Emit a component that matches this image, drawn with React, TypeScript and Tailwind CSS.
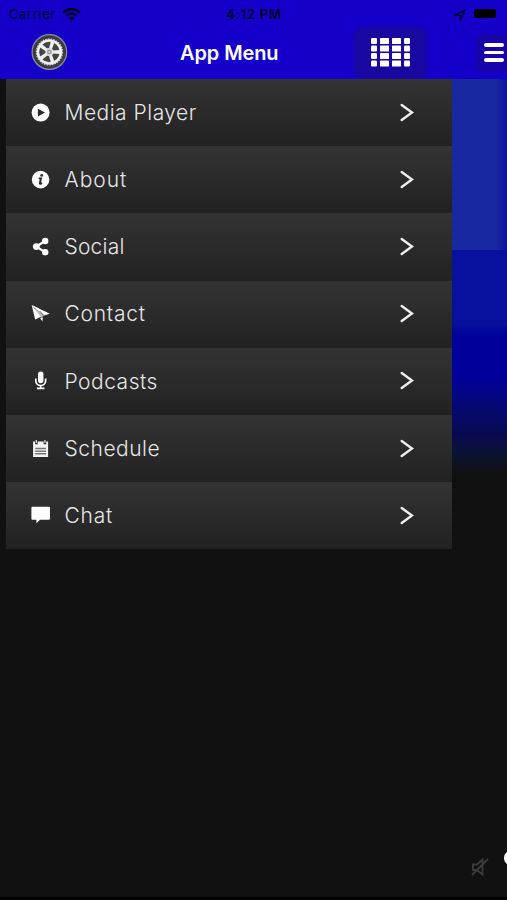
import React from 'react';

const PlayIcon = () => (
  <svg width="20" height="20" viewBox="0 0 20 20">
    <circle cx="9.6" cy="9.6" r="9" fill="#fff" />
    <path d="M6.9 5.8 L14 9.6 L6.9 13.4 Z" fill="#292929" />
  </svg>
);

const InfoIcon = () => (
  <svg width="20" height="20" viewBox="0 0 20 20">
    <circle cx="9.6" cy="9.6" r="8.8" fill="#fff" />
    <circle cx="10.7" cy="5.4" r="1.4" fill="#292929" />
    <path d="M7.6 8.4 H10 L8.8 13.4 Q8.9 14.3 11 12.9" fill="none" stroke="#292929" strokeWidth="1.9" />
  </svg>
);

const ShareIcon = () => (
  <svg width="20" height="20" viewBox="0 0 20 20" fill="#fff">
    <path d="M14.2 4 L5.3 9.6 L14.2 15.2" fill="none" stroke="#fff" strokeWidth="2.3" />
    <circle cx="14.2" cy="4" r="3.2" />
    <circle cx="5.3" cy="9.6" r="3.4" />
    <circle cx="14.2" cy="15.2" r="3.2" />
  </svg>
);

const SendIcon = () => (
  <svg width="20" height="20" viewBox="0 0 20 20" fill="#fff">
    <path d="M0.6 1 L18.8 9.8 L13 11.6 L0.6 1 L10.4 12.6 L4.2 15.6 Z" />
    <path d="M0.6 1 L13 11.6 L10.4 13.4 Z" fill="#bbb" />
    <path d="M0.6 1 L7 4.1 L13 11.2 Z" />
    <path d="M8.8 7.2 L12.4 11.2" stroke="#555" strokeWidth=".9" />
    <path d="M9 13.9 L11.8 13.2 L11.4 17.4 Z" />
  </svg>
);

const MicIcon = () => (
  <svg width="20" height="20" viewBox="0 0 20 20">
    <rect x="7" y="0.6" width="5.4" height="11.7" rx="2.7" fill="#fff" />
    <path d="M4.8 7.6 V9.7 A4.9 4.9 0 0 0 14.6 9.7 V7.6 M9.7 14.4 V17.4 M5.9 17.4 H13.5" fill="none" stroke="#fff" strokeWidth="1.7" />
  </svg>
);

const CalendarIcon = () => (
  <svg width="20" height="20" viewBox="0 0 20 20">
    <path d="M2.1 2.6 H4.1 V5.2 H6.7 V2.6 H12.6 V5.2 H15.2 V2.6 H17.1 V18.1 H2.1 Z" fill="#f4f4f4" />
    <path d="M5.3 0.9 V4.1 M13.9 0.9 V4.1" stroke="#ccc" strokeWidth="1.4" />
    <path d="M4.2 9.6 H15 M4.2 12.2 H15 M4.2 14.8 H15" stroke="#777" strokeWidth="1.5" />
  </svg>
);

const ChatIcon = () => (
  <svg width="20" height="20" viewBox="0 0 20 20">
    <path d="M1.5 .8 H18 Q19 .8 19 1.8 V12.8 Q19 13.8 18 13.8 H9 L5.4 17.3 V13.8 H1.5 Q.4 13.8 .4 12.8 V1.8 Q.4 .8 1.5 .8 Z" fill="#fff" />
  </svg>
);

const WifiIcon = () => (
  <svg width="19" height="14" viewBox="0 0 19 14" fill="none" stroke="#05002a">
    <path d="M1.2 4.5 A12 12 0 0 1 17.8 4.5" strokeWidth="2.7" />
    <path d="M4.1 7.7 A7.8 7.8 0 0 1 14.9 7.7" strokeWidth="2.4" />
    <path d="M6.4 9.9 A4.8 4.8 0 0 1 12.6 9.9 L9.5 13 Z" fill="#05002a" stroke="none" />
  </svg>
);

const WheelLogo = () => (
  <svg width="38" height="38" viewBox="-19.4 -19 38 38">
    <circle r="17.3" fill="#3b3b40" stroke="#8d8d9c" strokeWidth="1.2" />
    <circle r="11.5" fill="#444" stroke="#eee" strokeWidth="2.6" />
    <circle r="13" fill="none" stroke="#dedede" strokeWidth="1.2" strokeDasharray="1.5 1.2" />
    {[0, 72, 144, 216, 288].map((angle) => (
      <path key={angle} transform={`rotate(${angle})`} d="M3 -1.5 L11 -1.9 V1.9 L3 1.5 Z" fill="#f0f0f0" />
    ))}
    <circle r="4" fill="#e4e4e4" />
    <circle r="2.4" fill="#999" />
    <circle r="1" fill="#ddd" />
  </svg>
);

const GridIcon = () => (
  <svg width="39" height="29" viewBox="0 0 39 29" fill="#fff">
    {[0, 7.5, 15, 22.5].map((y) => (
      <g key={y}>
        <rect x="0" y={y} width="6" height="6" rx="1.2" />
        <rect x="9" y={y} width="9" height="6" rx=".6" />
        <rect x="21" y={y} width="9" height="6" rx=".6" />
        <rect x="33" y={y} width="6" height="6" rx="1.2" />
      </g>
    ))}
  </svg>
);

const menuItems = [
  { title: 'Media Player', icon: PlayIcon, spacing: 'tracking-[0.5px]' },
  { title: 'About', icon: InfoIcon, spacing: 'tracking-[1px]' },
  { title: 'Social', icon: ShareIcon, spacing: 'tracking-[0.2px]' },
  { title: 'Contact', icon: SendIcon, spacing: 'tracking-[0.75px]' },
  { title: 'Podcasts', icon: MicIcon, spacing: 'tracking-[0.5px]' },
  { title: 'Schedule', icon: CalendarIcon, spacing: 'tracking-[0.5px]' },
  { title: 'Chat', icon: ChatIcon, spacing: 'tracking-[0.8px]' },
];

const StatusBar = () => (
  <div className="grid h-[26px] grid-cols-3 items-center pt-[3px] pl-[9px] pr-[11px] text-[13px] text-[#05002a]">
    <div className="flex items-center gap-1.5">
      <span className="tracking-[0.6px]">Carrier</span>
      <WifiIcon />
    </div>
    <span className="pl-[3px] text-center font-semibold tracking-[0.75px]">4:12 PM</span>
    <div className="flex items-center justify-end gap-2">
      <svg width="12" height="12" viewBox="0 0 12 12" fill="none" stroke="#05002a" strokeWidth="1.4">
        <path d="M1 5.8 L11 1 L6.5 11 L6 6.2 Z" />
      </svg>
      <div className="mb-[2px] h-[9px] w-[22px] rounded-[2px] bg-black" />
    </div>
  </div>
);

const Header = () => (
  <header className="h-[79px] shrink-0 bg-[#1400c8]">
    <StatusBar />
    <div className="flex h-[53px] items-center overflow-hidden">
      <div className="ml-[30px] w-[150px] shrink-0 pb-px">
        <WheelLogo />
      </div>
      <h1 className="w-[174px] shrink-0 text-[20px] font-semibold tracking-[-0.1px] text-white">App Menu</h1>
      <button className="flex h-[52px] w-[73px] shrink-0 items-center justify-center rounded-[10px] bg-[#1807a0]">
        <GridIcon />
      </button>
      <button className="ml-[49px] flex h-[38px] w-[38px] shrink-0 flex-col justify-center gap-[4px] rounded-[6px] bg-[#1704aa] pl-[8px]">
        <span className="h-[3.5px] w-5 rounded-full bg-white" />
        <span className="h-[3.5px] w-5 rounded-full bg-white" />
        <span className="h-[3.5px] w-5 rounded-full bg-white" />
      </button>
    </div>
  </header>
);

const Menu = () => (
  <nav className="w-[446px] shrink-0">
    {menuItems.map((item) => {
      const Icon = item.icon;

      return (
        <a
          key={item.title}
          className="flex h-[67.2px] items-center bg-linear-to-b from-[#333333] to-[#222222] pl-[25px] pr-[38px]"
        >
          <Icon />
          <span className={`ml-[13.5px] flex-1 text-[21px] font-[340] text-[#e6e6e6] ${item.spacing}`}>{item.title}</span>
          <svg width="14" height="20" viewBox="0 0 14 20" fill="none" stroke="#eee" strokeWidth="2.4">
            <path d="M1.7 2 L12 9.5 L1.7 17" strokeLinecap="round" />
          </svg>
        </a>
      );
    })}
  </nav>
);

const Backdrop = () => (
  <div className="flex flex-1 flex-col">
    <div className="h-[171px] bg-linear-to-r from-[#1728a0] from-80% to-[#0b159e]" />
    <div className="h-[86px] bg-linear-to-b from-[#08109e] from-85% to-[#00009a]" />
    <div className="h-[138px] bg-linear-to-b from-[#00009a] from-30% via-[#09094f] via-72% to-[#111111]" />
  </div>
);

export default function App() {
  return (
    <div className="flex h-[900px] w-[507px] flex-col overflow-hidden border-b-[3px] border-black bg-[#111111] font-['Inter',sans-serif]">
      <Header />
      <main className="flex pl-1.5">
        <Menu />
        <Backdrop />
      </main>
      <footer className="mt-auto flex items-center justify-end pb-[14px]">
        <svg width="18" height="20" viewBox="0 0 18 20" fill="none" stroke="#3c3c3c" strokeWidth="1.8">
          <path d="M2 7.5 H6 L11.5 2.5 V17.5 L6 13 H2 Z M1 18 L17 2" />
        </svg>
        <div className="-mr-2.5 mb-[18px] ml-[15px] h-[14px] w-[13px] rounded-full bg-white" />
      </footer>
    </div>
  );
}
